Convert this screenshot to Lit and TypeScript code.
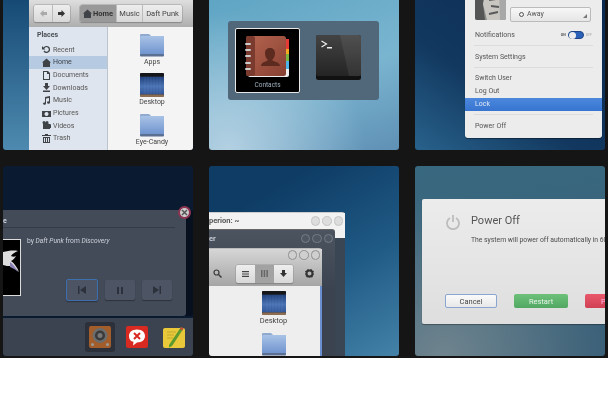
import { LitElement, html, css, svg } from "lit";
import { customElement } from "lit/decorators.js";

const folder = (w = 24, h = 24, id = "f") => html`<svg class="ico" width=${w} height=${h} viewBox="0 0 24 24">
  <defs><linearGradient id=${id} x1="0" y1="0" x2="0" y2="1"><stop offset="0" stop-color="#a9c3e6"/><stop offset="1" stop-color="#6f93cf"/></linearGradient></defs>
  <path d="M1 1h8l2 2h12a1 1 0 0 1 1 1v18a1 1 0 0 1-1 1H1a1 1 0 0 1-1-1V2a1 1 0 0 1 1-1z" fill="#8fa9cf"/>
  <rect x="0" y="3" width="24" height="18.500" rx="1.500" fill="url(#${id})"/>
  <rect x="0" y="21" width="24" height="2.500" rx="1" fill="#5b6f92"/></svg>`;

const desktop = (id = "d") => html`<svg class="ico" width="24" height="24" viewBox="0 0 24 24">
  <defs><linearGradient id=${id} x1="0" y1="0" x2="0" y2="1"><stop offset="0" stop-color="#1f3f78"/><stop offset=".55" stop-color="#4a73b4"/><stop offset="1" stop-color="#2f5596"/></linearGradient></defs>
  <rect width="24" height="24" rx="2" fill="#333"/>
  <rect y="3.500" width="24" height="18" fill="url(#${id})"/>
  <path d="M5 4v17M8 4v17M11 4v17M14 4v17M17 4v17M20 4v17" stroke="#a8bfe4" stroke-opacity=".12"/>
  <rect y="0" width="24" height="3.500" rx="1" fill="#15161a"/>
  <rect y="21.500" width="24" height="2.500" rx="1" fill="#8c6d52"/></svg>`;

const sideIcon = (d: string) => html`<svg class="side-ico" width="9" height="9" viewBox="0 0 9 9"><path d=${d} fill="#3f4348"/></svg>`;
const places: [string, string, boolean?][] = [
  ["Recent", "M4.500 1a3.500 3.500 0 1 1-3 5.200l1-.6a2.300 2.300 0 1 0-.2-2L3.500 4.500H0V1l1.400 1.500A3.500 3.500 0 0 1 4.500 1z"],
  ["Home", "M4.500.5 9 4.500H8V9H1V4.500H0z", true],
  ["Documents", "M1 0h5l2 2v7H1zm1 1v7h5V3H5V1z"],
  ["Downloads", "M3 0h3v3h2L4.500 7 1 3h2zM1 7.500h7V9H1z"],
  ["Music", "M3 1l5-1v6.500a1.500 1.200 0 1 1-1-1.100V2L4 2.600v5a1.500 1.200 0 1 1-1-1.100z"],
  ["Pictures", "M0 2h9v6H0zm4.500 1a2 2 0 1 0 .01 0z"],
  ["Videos", "M.5 1.500a1.500 1.500 0 0 1 3 0 1.500 1.500 0 0 1 3 0V3H8v5H1V3z M7 4l2-1v4L7 6z"],
  ["Trash", "M3 0h3v1h3v1H0V1h3zM1 3h7v6H1zm1.500 1v4M2 4v4h1V4zm2 0v4h1V4zm2 0v4h1V4z"],
];

const ctl = (cls = "") => html`<span class="ctls ${cls}"><i></i><i></i><i></i></span>`;

@customElement("app-root")
export class AppRoot extends LitElement {
  static styles = css`
    :host { display: block; width: 608px; height: 402px; background: #fff; font-family: Roboto, "Liberation Sans", sans-serif; overflow: hidden; }
    * { box-sizing: border-box; }
    .stage { height: 358px; background: #151515; display: grid; grid-template-columns: repeat(3, 190px); grid-template-rows: 150px 190px; gap: 16px; padding-left: 3px; filter: blur(.4px); overflow: hidden; }
    .tile { position: relative; overflow: hidden; border-radius: 3px; }
    .t1 { border-radius: 0 0 3px 3px; background: linear-gradient(180deg, #164a75, #4e8ab0); }
    .t2 { border-radius: 0 0 3px 3px; background: radial-gradient(circle at 10% 100%, #b3d0e2, transparent 60%), linear-gradient(160deg, #5fa5c4 0%, #7ab5d0 55%, #5f90b5 100%); }
    .t3 { border-radius: 0 0 3px 3px; background: linear-gradient(35deg, #28628c 0%, #12385f 40%, #0b2a52 100%); }
    .t4 { background: #0a1a30; }
    .t5 { background: linear-gradient(150deg, #0e3c65 20%, #1f5a85 60%, #4482a8 100%); }
    .t6 { background: radial-gradient(circle at 15% 100%, #6f848e, transparent 65%), linear-gradient(170deg, #38687f, #3b6078); }
    .ico, .side-ico { display: block; flex: none; }

    /* Files window */
    .files { position: absolute; left: 26px; top: 0; right: 0; bottom: 0; display: flex; flex-direction: column; }
    .files .tb { height: 27px; flex: none; background: linear-gradient(#dedede, #aeaeae); display: flex; align-items: center; gap: 10px; padding: 0 0 0 5px; }
    .seg { display: flex; height: 17px; border-radius: 2px; box-shadow: 0 0 0 .5px #999, 0 1px 1px #0005; background: linear-gradient(#eee, #d8d8d8); font-size: 7.500px; color: #444; }
    .seg > span { display: flex; align-items: center; justify-content: center; border-left: 1px solid #bbb; }
    .seg > span:first-child { border-left: 0; }
    .seg .on { background: #999; font-weight: 700; color: #333; border-radius: 2px 0 0 2px; gap: 1px; }
    .files .body { flex: 1; display: flex; min-height: 0; }
    .sidebar { width: 79px; background: #dfe5ee; border-right: 1px solid #bcc4cf; padding-top: 4px; font-size: 7px; color: #555; }
    .sidebar h4 { margin: 0 0 3.500px 8px; font-size: 7px; line-height: 9px; font-weight: 700; color: #4a4e54; }
    .place { display: flex; align-items: center; gap: 2px; height: 12.670px; padding-left: 13px; }
    .place.sel { background: #b6cbe2; color: #3c4148; }
    .icons { flex: 1; background: #f4f4f4; display: flex; flex-direction: column; align-items: center; padding: 6px 0 0 3px; font-size: 7px; color: #444; overflow: hidden; }
    .icons .it { display: flex; flex-direction: column; align-items: center; height: 40px; flex: none; }
    .icons .it span { line-height: 11px; margin-top: 0; }

    /* App switcher */
    .switcher { position: absolute; left: 19px; top: 21px; width: 151px; height: 79px; background: #50687a; border-radius: 3px; display: flex; gap: 16px; padding: 7px; }
    .sel-app { width: 65px; height: 65px; background: #000; border: 1px solid #e8e8e8; border-radius: 2px; display: flex; flex-direction: column; align-items: center; padding-top: 6px; color: #9fb0c0; font-size: 6.500px; line-height: 8px; gap: 1px; }
    .term { margin-top: 7px; }

    /* User menu */
    .menu { position: absolute; left: 50px; top: -8px; width: 137px; height: 146px; background: #ececec; border-radius: 3px; box-shadow: 0 1px 1px #0006; font-size: 7px; color: #555; display: flex; flex-direction: column; }
    .who { display: flex; gap: 4px; padding: 0 11px 0 10px; height: 28px; flex: none; }
    .avatar { width: 31px; height: 28px; border-radius: 2px; flex: none; }
    .drop { flex: 1; height: 15px; margin-top: 14.500px; border: 1px solid #bbb; border-radius: 2px; background: linear-gradient(#f7f7f7, #e6e6e6); display: flex; align-items: center; padding-left: 8px; gap: 3px; position: relative; font-size: 7px; }
    .drop b { width: 5px; height: 5px; border: 1px solid #555; border-radius: 50%; }
    .drop::after { content: ""; position: absolute; right: 3px; bottom: 3px; border: 2px solid transparent; border-right-color: #777; border-bottom-color: #777; }
    .row { padding-left: 10px; display: flex; align-items: center; flex: none; }
    .row.n { height: 13.500px; }
    .row.log { height: 12.500px; }
    .row.gap4 { margin-top: 4px; }
    .row.gap5 { margin-top: 5px; }
    .notif { height: 15px; margin-top: 7px; justify-content: space-between; padding-right: 10px; }
    .sw { display: flex; align-items: center; gap: 2px; font-size: 3.500px; color: #555; font-weight: 700; }
    .sw u { text-decoration: none; color: #bbb; }
    .sw i { width: 16px; height: 8px; border-radius: 4px; background: #2b62b8; border: .5px solid #1d4486; position: relative; display: block; }
    .sw i::before { content: ""; position: absolute; left: 0; top: 0; width: 7px; height: 7px; background: #eee; border-radius: 50%; }
    .menu hr { flex: none; border: 0; border-top: 1px solid #dcdcdc; margin: 3px 9px 0; height: 1px; }
    .row.sel { background: linear-gradient(#4c88dc, #3674d0); color: #dfe8f5; height: 13px; }

    /* Music dialog */
    .player { position: absolute; left: 0; top: 44px; width: 183px; height: 106px; background: #434a58; border-radius: 0 3px 3px 0; box-shadow: 7px 0 0 #06101e; color: #cdd3dc; font-size: 6.700px; }
    .player .head { height: 18px; margin-right: 11px; border-bottom: 1px solid #343a46; font-size: 7px; font-weight: 700; line-height: 22px; }
    .player .main { display: flex; gap: 6px; padding-top: 11px; }
    .cover { width: 18px; height: 57px; flex: none; border: 1px solid #ddd; border-left: 0; background: #000; }
    .cover svg { display: block; }
    .player .main > div:last-child { margin-top: -3px; line-height: 10px; }
    .player em { font-style: italic; }
    .trio { position: absolute; left: 63px; top: 69px; display: flex; gap: 7px; align-items: center; }
    .trio span { height: 20px; width: 30px; display: flex; align-items: center; justify-content: center; background: #4d5564; border-radius: 2px; box-shadow: 0 1px 1px #0005; }
    .trio span.foc { width: 32px; height: 22px; border: 1px solid #3d6fae; }
    .x { position: absolute; left: 175px; top: 40px; width: 13px; height: 13px; border-radius: 50%; background: #ccc; border: 2px solid #8e3452; display: flex; align-items: center; justify-content: center; }
    .dock { position: absolute; left: 0; right: 0; bottom: 0; height: 38px; background: #3c4350; display: flex; align-items: center; padding-left: 82px; gap: 15px; }
    .dock .cur { width: 30px; height: 30px; background: #2b303a; border-radius: 3px; display: flex; align-items: center; justify-content: center; margin-right: -4px; }

    /* Overlapping windows */
    .w { position: absolute; left: 0; border-radius: 0 3px 0 0; }
    .w1 { top: 46px; width: 136px; bottom: 0; background: #3a4653; border-top: 1px solid #ccc; }
    .w1 .bar { height: 25px; background: #f2f2f2; display: flex; align-items: flex-start; justify-content: space-between; font-size: 7.500px; font-weight: 700; color: #555; padding: 3px 2px 0 0; }
    .w2 { top: 63px; width: 126px; bottom: 0; background: linear-gradient(#4c5460, #3b4350 60px); border-top: 1px solid #666; }
    .w2 .bar { height: 17px; display: flex; align-items: center; justify-content: space-between; font-size: 7.500px; font-weight: 700; color: #c6ccd4; padding-right: 2px; }
    .w3 { top: 82px; width: 113px; bottom: 0; border-top: 1px solid #bbb; display: flex; flex-direction: column; }
    .w3 .tb { height: 37px; background: linear-gradient(#d6d6d6, #a5a5a5); display: flex; flex-direction: column; flex: none; }
    .w3 .tb .top { display: flex; justify-content: flex-end; padding: 1px 2px 0 0; }
    .w3 .tb .tools { display: flex; align-items: center; padding-left: 4px; margin-top: 5px; }
    .w3 .tri { margin-left: 14px; height: 18px; display: flex; border-radius: 2px; box-shadow: 0 0 0 .5px #999, 0 1px 1px #0005; background: linear-gradient(#eee, #d8d8d8); }
    .w3 .tri span { width: 19px; display: flex; align-items: center; justify-content: center; }
    .w3 .tri span.on { background: #a2a2a2; }
    .w3 .gear { margin-left: 12px; }
    .w3 .content { flex: 1; background: #eee; border-right: 2px solid #6a8fd0; display: flex; flex-direction: column; align-items: center; padding: 5px 0 0 18px; font-size: 7.500px; color: #444; min-height: 0; overflow: hidden; }
    .w3 .content span { line-height: 11px; margin: 0 0 6px; }
    .ctls { display: flex; gap: 2px; }
    .ctls i { width: 9.500px; height: 9.500px; border-radius: 50%; background: #ddd; border: 1px solid #c4c4c4; display: block; }
    .ctls.dk i { background: #4f5763; border-color: #767d88; }
    .ctls.md i { background: #cfcfcf; border-color: #8f8f8f; }

    /* Power off */
    .power { position: absolute; left: 7px; top: 33px; width: 183px; height: 125px; background: linear-gradient(#ececec, #dedede); border-radius: 2px 0 0 2px; box-shadow: 0 1px 1px #0005; overflow: hidden; }
    .power .top { display: flex; gap: 11px; padding: 15px 0 0 24px; }
    .power h3 { margin: 0 0 8px; font-size: 11px; line-height: 14px; font-weight: 400; color: #555; }
    .power p { margin: 0; font-size: 6.800px; line-height: 9px; white-space: nowrap; color: #4c4c4c; }
    .btns { position: absolute; left: 23px; top: 95px; display: flex; gap: 17px; font-size: 7.500px; }
    .btns span { width: 52px; height: 14px; flex: none; border-radius: 2px; display: flex; align-items: center; justify-content: center; }
    .btns .c { background: linear-gradient(#fafafa, #e8e8e8); border: 1px solid #8aa5d0; color: #444; }
    .btns .r { width: 54px; background: linear-gradient(#6cc07a, #52a862); color: #e8f5ea; }
    .btns .p { width: 54px; background: linear-gradient(#e9586a, #d04055); color: #fbe; justify-content: flex-start; padding-left: 16px; white-space: nowrap; }
  `;

  render() {
    const arrow = (fill: string, flip: boolean) => html`<svg width="7" height="7" viewBox="0 0 7 7" style=${flip ? "transform:scaleX(-1)" : ""}><path d="M3.500 0 7 3.500 3.500 7V5H0V2h3.500z" fill=${fill}/></svg>`;
    return html`<div class="stage">
      <div class="tile t1">
        <div class="files">
          <div class="tb">
            <div class="seg" style="width:36px"><span style="width:18px">${arrow("#aaa", true)}</span><span style="width:18px">${arrow("#333", false)}</span></div>
            <div class="seg" style="width:102px">
              <span class="on" style="width:36px">${sideIcon("M4.500.5 9 4.500H8V9H1V4.500H0z")}Home</span>
              <span style="width:26px">Music</span><span style="width:40px">Daft Punk</span>
            </div>
          </div>
          <div class="body">
            <div class="sidebar">
              <h4>Places</h4>
              ${places.map(([n, d, s]) => html`<div class="place ${s ? "sel" : ""}">${sideIcon(d)}<span>${n}</span></div>`)}
            </div>
            <div class="icons">
              <div class="it">${folder(24, 24, "f1")}<span>Apps</span></div>
              <div class="it">${desktop("d1")}<span>Desktop</span></div>
              <div class="it">${folder(24, 24, "f2")}<span>Eye-Candy</span></div>
            </div>
          </div>
        </div>
      </div>

      <div class="tile t2">
        <div class="switcher">
          <div class="sel-app">
            <svg class="ico" width="45" height="45" viewBox="0 0 45 45">
              <defs><linearGradient id="bk" x1="0" y1="0" x2="1" y2="1"><stop offset="0" stop-color="#b66550"/><stop offset="1" stop-color="#874032"/></linearGradient></defs>
              <rect x="3" y="4" width="41" height="38" rx="2" fill="#eee"/>
              <rect x="41" y="4" width="3" height="10" fill="#e53935"/><rect x="41" y="14" width="3" height="10" fill="#f5a623"/><rect x="41" y="19" width="3" height="7" fill="#7cb342"/><rect x="41" y="26" width="3" height="8" fill="#4fb3e8"/>
              <rect x="1" y="1" width="40" height="40" rx="2.500" fill="url(#bk)"/>
              <rect x="1" y="1" width="9" height="40" rx="2" fill="#7a3b2e"/>
              ${[8, 14, 20, 27, 33].map((y) => svg`<rect x="0" y=${y} width="6" height="2" rx="1" fill="#ccc"/>`)}
              <path d="M16 31c0-4 5-4 7-6-2-1.500-3-4-3-7 0-3 2-5 5-5s5 2 5 5c0 3-1 5.500-3 7 2 2 8 2 8 6z" fill="#5d2a20"/>
            </svg>
            <span>Contacts</span>
          </div>
          <svg class="ico term" width="45" height="45" viewBox="0 0 45 45">
            <defs><linearGradient id="tm" x1="0" y1="0" x2="0" y2="1"><stop offset="0" stop-color="#434343"/><stop offset="1" stop-color="#242424"/></linearGradient></defs>
            <rect width="45" height="45" rx="2.500" fill="#111"/>
            <rect width="45" height="41" rx="2.500" fill="url(#tm)"/>
            <path d="M24 0h19a2 2 0 0 1 2 2v39H33z" fill="#fff" fill-opacity=".07"/>
            <path d="M5.500 6l5 3-5 3" fill="none" stroke="#eee" stroke-width="1.200"/><rect x="11" y="12" width="5" height="1.500" fill="#eee"/>
          </svg>
        </div>
      </div>

      <div class="tile t3">
        <div class="menu">
          <div class="who">
            <svg class="avatar" viewBox="0 0 31 28">
              <rect width="31" height="28" fill="#8c8c8c"/>
              <path d="M0 0h12L8 12l2 16H0z" fill="#555"/>
              <path d="M10 0h21v14l-4 14H12L8 12z" fill="#c9c6c2"/>
              <path d="M14 8l7-1M16 14l8 1M14 22l9-2" stroke="#5a5a5a" stroke-width="2"/>
              <path d="M24 0h7v28h-6z" fill="#a8a8a8"/>
            </svg>
            <div class="drop"><b></b>Away</div>
          </div>
          <div class="row notif"><span>Notifications</span><div class="sw">ON<i></i><u>OFF</u></div></div>
          <hr />
          <div class="row n gap4">System Settings</div>
          <hr />
          <div class="row n gap4">Switch User</div>
          <div class="row n log">Log Out</div>
          <div class="row sel">Lock</div>
          <hr />
          <div class="row n gap5">Power Off</div>
        </div>
      </div>

      <div class="tile t4">
        <div class="player">
          <div class="head">e</div>
          <div class="main">
            <div class="cover"><svg width="17" height="55" viewBox="0 0 17 55"><path d="M0 12c5-1 10-2 15-1-3 1-6 3-7 5 2 1 3 1 5 0-2 3-3 4-5 5 3 2 6 6 8 11-3-3-6-5-9-6-2 0-4 0-7-1z" fill="#ddd"/><path d="M7 22c3 2 6 6 8 10-3-3-6-4-8-5z" fill="#8a80b5"/></svg></div>
            <div>by <em>Daft Punk</em> from <em>Discovery</em></div>
          </div>
          <div class="trio">
            <span class="foc"><svg width="8" height="8" viewBox="0 0 8 8"><path d="M0 0h1.500v8H0zM8 0v8L2 4z" fill="#2c313b"/></svg></span>
            <span><svg width="6" height="7" viewBox="0 0 6 7"><path d="M0 0h2v7H0zM4 0h2v7H4z" fill="#2c313b"/></svg></span>
            <span><svg width="8" height="8" viewBox="0 0 8 8"><path d="M8 0H6.500v8H8zM0 0v8l6-4z" fill="#2c313b"/></svg></span>
          </div>
        </div>
        <div class="x"><svg width="7" height="7" viewBox="0 0 7 7"><path d="M1 1l5 5M6 1L1 6" stroke="#555" stroke-width="1.500"/></svg></div>
        <div class="dock">
          <div class="cur"><svg class="ico" width="22" height="22" viewBox="0 0 22 22"><rect width="22" height="22" rx="2" fill="#a35d2a"/><circle cx="11" cy="9.500" r="7.500" fill="#6c6c6c"/><circle cx="11" cy="9.500" r="5" fill="#3a3a3a"/><circle cx="11" cy="9.500" r="2.500" fill="#777"/><circle cx="3.500" cy="18.500" r="1.500" fill="#999"/><circle cx="18.500" cy="18.500" r="1.500" fill="#999"/></svg></div>
          <svg class="ico" width="22" height="22" viewBox="0 0 22 22"><rect width="22" height="22" rx="2" fill="#d92a22"/><path d="M11 3.500c5 0 8 2.800 8 6.500s-3 6.500-8 6.500l-4 3 .5-3.700C4.500 15.500 3 13 3 10c0-3.700 3-6.500 8-6.500z" fill="#fff"/><path d="M8 7l6 6M14 7l-6 6" stroke="#d92a22" stroke-width="2"/></svg>
          <svg class="ico" width="22" height="22" viewBox="0 0 22 22"><rect y="2" width="22" height="20" rx="2" fill="#e9c93a"/><path d="M4 6h9M4 9h7M4 12h6" stroke="#b39a2a" stroke-width=".7"/><path d="M6 19 18 1l2.500 1.500L9 20l-3 1.500z" fill="#5c9a2e"/><path d="M18 1l2.500 1.500-1.200 2L17 3z" fill="#c9473a"/></svg>
        </div>
      </div>

      <div class="tile t5">
        <div class="w w1"><div class="bar"><span>perion: ~</span>${ctl()}</div></div>
        <div class="w w2"><div class="bar"><span>er</span>${ctl("dk")}</div></div>
        <div class="w w3">
          <div class="tb">
            <div class="top">${ctl("md")}</div>
            <div class="tools">
              <svg width="9" height="9" viewBox="0 0 9 9"><circle cx="3.500" cy="3.500" r="2.500" fill="none" stroke="#3a3a3a" stroke-width="1.200"/><path d="M5.500 5.500 8.500 8.500" stroke="#3a3a3a" stroke-width="1.500"/></svg>
              <div class="tri">
                <span><svg width="7" height="6" viewBox="0 0 7 6"><path d="M0 0h7v1.200H0zM0 2.400h7v1.200H0zM0 4.800h7V6H0z" fill="#444"/></svg></span>
                <span class="on"><svg width="7" height="7" viewBox="0 0 7 7"><path d="M0 0h1.500v7H0zM2.700 0h1.500v7H2.700zM5.400 0h1.500v7H5.400z" fill="#666"/></svg></span>
                <span><svg width="7" height="7" viewBox="0 0 7 7"><path d="M2 0h3v3h2L3.500 7 0 3h2z" fill="#333"/></svg></span>
              </div>
              <svg class="gear" width="9" height="9" viewBox="0 0 9 9"><circle cx="4.500" cy="4.500" r="3" fill="none" stroke="#333" stroke-width="2"/><circle cx="4.500" cy="4.500" r="4.400" fill="none" stroke="#333" stroke-width="1" stroke-dasharray="1.500 1.500"/></svg>
            </div>
          </div>
          <div class="content">
            ${desktop("d2")}<span>Desktop</span>
            ${folder(24, 24, "f3")}
          </div>
        </div>
      </div>

      <div class="tile t6">
        <div class="power">
          <div class="top">
            <svg class="ico" width="14" height="16" viewBox="0 0 14 16"><path d="M4 4a6 6 0 1 0 6 0" fill="none" stroke="#bdbdbd" stroke-width="1.800"/><path d="M7 1v7" stroke="#bdbdbd" stroke-width="1.800"/></svg>
            <div><h3>Power Off</h3><p>The system will power off automatically in 60 seconds.</p></div>
          </div>
          <div class="btns"><span class="c">Cancel</span><span class="r">Restart</span><span class="p">Power Off</span></div>
        </div>
      </div>
    </div>`;
  }
}
